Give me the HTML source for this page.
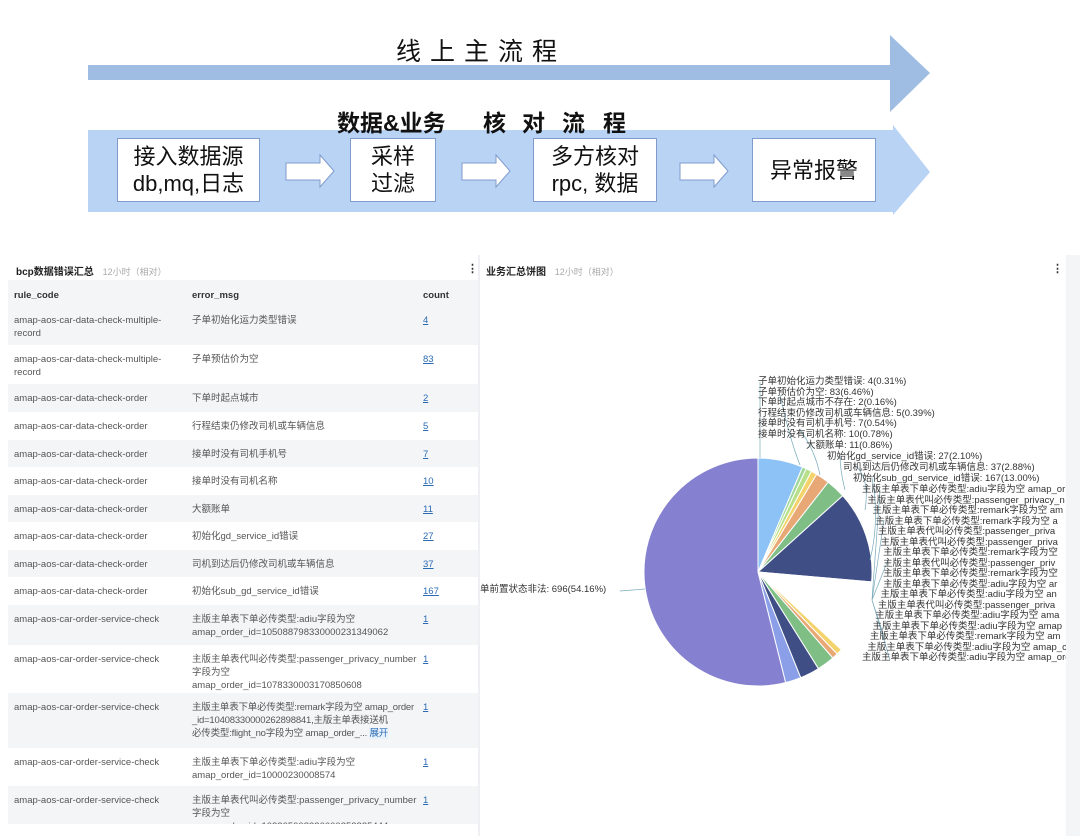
<!DOCTYPE html>
<html><head><meta charset="utf-8"><style>
*{margin:0;padding:0;box-sizing:border-box}
body{width:1080px;height:836px;background:#fff;position:relative;overflow:hidden;font-family:"Liberation Sans","Noto Sans CJK SC",sans-serif;color:#333}
.a{position:absolute}
.box{position:absolute;background:#fff;border:1px solid #7f9ccc;display:flex;align-items:center;justify-content:center;text-align:center;font-size:22px;line-height:27px;color:#111}
.row{position:absolute;left:8px;width:470px;font-size:9.5px;color:#555;line-height:13px}
.row .c1{position:absolute;left:6px;top:8px;width:150px}
.row .c2{position:absolute;left:184px;top:8px;width:225px}
.row .c3{position:absolute;left:415px;top:8px;color:#2a6bb5;text-decoration:underline}
.g{background:#f4f5f7}
.lbl{position:absolute;font-size:9.5px;color:#333;white-space:nowrap;line-height:10.5px}
.t{position:absolute;top:104px;font-size:23px;color:#111;font-weight:bold}
</style></head><body>
<svg class="a" style="left:0;top:0" width="1080" height="230">
<polygon points="88,65 890,65 890,35 930,73 890,112 890,80 88,80" fill="#9fbde3"/>
<polygon points="88,130 893,130 893,125 930,172 893,215 893,212 88,212" fill="#b8d3f4"/>
<g fill="#fff" stroke="#7f9ccc" stroke-width="1">
<polygon points="286,163 320,163 320,155 334,171 320,187 320,180 286,180"/>
<polygon points="462,163 496,163 496,155 510,171 496,187 496,180 462,180"/>
<polygon points="680,163 714,163 714,155 728,171 714,187 714,180 680,180"/>
</g>
</svg>
<div class="a" style="left:396px;top:32px;font-size:25px;letter-spacing:9px;color:#111">线上主流程</div>
<div class="t" style="left:337px">数据&amp;业务</div>
<div class="t" style="left:483px">核</div>
<div class="t" style="left:522px">对</div>
<div class="t" style="left:562px">流</div>
<div class="t" style="left:603px">程</div>
<div class="box" style="left:117px;top:138px;width:143px;height:64px">接入数据源<br>db,mq,日志</div>
<div class="box" style="left:350px;top:138px;width:86px;height:64px">采样<br>过滤</div>
<div class="box" style="left:533px;top:138px;width:124px;height:64px">多方核对<br>rpc, 数据</div>
<div class="box" style="left:752px;top:138px;width:124px;height:64px">异常报警</div>

<div class="a" style="left:16px;top:263px;font-size:10px;font-weight:bold;color:#222">bcp数据错误汇总 <span style="font-weight:normal;color:#aaa;font-size:9px;margin-left:6px">12小时（相对）</span></div>
<div class="a" style="left:467px;top:262px;font-size:11px;font-weight:bold">⋮</div>
<div class="row g" style="top:280px;height:26px;font-weight:bold;color:#333"><span class="c1" style="top:9px">rule_code</span><span class="c2" style="top:9px">error_msg</span><span class="c3" style="top:9px;color:#333;text-decoration:none;left:415px">count</span></div>
<div class="row g" style="top:306px;height:39px"><span class="c1">amap-aos-car-data-check-multiple-record</span><span class="c2">子单初始化运力类型错误</span><span class="c3">4</span></div>
<div class="row" style="top:345px;height:39px"><span class="c1">amap-aos-car-data-check-multiple-record</span><span class="c2">子单预估价为空</span><span class="c3">83</span></div>
<div class="row g" style="top:384px;height:28px"><span class="c1">amap-aos-car-data-check-order</span><span class="c2">下单时起点城市</span><span class="c3">2</span></div>
<div class="row" style="top:412px;height:28px"><span class="c1">amap-aos-car-data-check-order</span><span class="c2">行程结束仍修改司机或车辆信息</span><span class="c3">5</span></div>
<div class="row g" style="top:440px;height:27px"><span class="c1">amap-aos-car-data-check-order</span><span class="c2">接单时没有司机手机号</span><span class="c3">7</span></div>
<div class="row" style="top:467px;height:28px"><span class="c1">amap-aos-car-data-check-order</span><span class="c2">接单时没有司机名称</span><span class="c3">10</span></div>
<div class="row g" style="top:495px;height:27px"><span class="c1">amap-aos-car-data-check-order</span><span class="c2">大额账单</span><span class="c3">11</span></div>
<div class="row" style="top:522px;height:28px"><span class="c1">amap-aos-car-data-check-order</span><span class="c2">初始化gd_service_id错误</span><span class="c3">27</span></div>
<div class="row g" style="top:550px;height:27px"><span class="c1">amap-aos-car-data-check-order</span><span class="c2">司机到达后仍修改司机或车辆信息</span><span class="c3">37</span></div>
<div class="row" style="top:577px;height:28px"><span class="c1">amap-aos-car-data-check-order</span><span class="c2">初始化sub_gd_service_id错误</span><span class="c3">167</span></div>
<div class="row g" style="top:605px;height:40px"><span class="c1" style="width:170px">amap-aos-car-order-service-check</span><span class="c2">主版主单表下单必传类型:adiu字段为空 amap_order_id=105088798330000231349062</span><span class="c3">1</span></div>
<div class="row" style="top:645px;height:48px"><span class="c1" style="width:170px">amap-aos-car-order-service-check</span><span class="c2">主版主单表代叫必传类型:passenger_privacy_number 字段为空<br>amap_order_id=1078330003170850608</span><span class="c3">1</span></div>
<div class="row g" style="top:693px;height:55px"><span class="c1" style="width:170px">amap-aos-car-order-service-check</span><span class="c2" style="width:230px;letter-spacing:-0.2px">主版主单表下单必传类型:remark字段为空 amap_order _id=10408330000262898841,主版主单表接送机<br>必传类型:flight_no字段为空 amap_order_... <span style="color:#2a6bb5;background:#e8f1fb">展开</span></span><span class="c3">1</span></div>
<div class="row" style="top:748px;height:38px"><span class="c1" style="width:170px">amap-aos-car-order-service-check</span><span class="c2">主版主单表下单必传类型:adiu字段为空 amap_order_id=10000230008574</span><span class="c3">1</span></div>
<div class="row g" style="top:786px;height:38px;overflow:hidden"><span class="c1" style="width:170px">amap-aos-car-order-service-check</span><span class="c2">主版主单表代叫必传类型:passenger_privacy_number 字段为空<br>amap_order_id=102205008330000253835444</span><span class="c3">1</span></div>
<div class="a" style="left:478px;top:255px;width:2px;height:581px;background:#eef0f3"></div>

<div class="a" style="left:486px;top:263px;font-size:10px;font-weight:bold;color:#222">业务汇总饼图 <span style="font-weight:normal;color:#aaa;font-size:9px;margin-left:6px">12小时（相对）</span></div>
<div class="a" style="left:1052px;top:262px;font-size:11px;font-weight:bold">⋮</div>
<svg class="a" style="left:0;top:0" width="1080" height="836" id="pie"></svg>
<div class="lbl" style="left:758px;top:377px">子单初始化运力类型错误: 4(0.31%)<br>子单预估价为空: 83(6.46%)<br>下单时起点城市不存在: 2(0.16%)<br>行程结束仍修改司机或车辆信息: 5(0.39%)<br>接单时没有司机手机号: 7(0.54%)<br>接单时没有司机名称: 10(0.78%)</div>
<div class="lbl" style="left:806px;top:441px">大额账单: 11(0.86%)</div>
<div class="lbl" style="left:827px;top:452px">初始化gd_service_id错误: 27(2.10%)</div>
<div class="lbl" style="left:843px;top:463px">司机到达后仍修改司机或车辆信息: 37(2.88%)</div>
<div class="lbl" style="left:853px;top:474px">初始化sub_gd_service_id错误: 167(13.00%)</div>
<div class="lbl" style="left:862px;top:485px">主版主单表下单必传类型:adiu字段为空 amap_or<br>&nbsp;&nbsp;主版主单表代叫必传类型:passenger_privacy_n<br>&nbsp;&nbsp;&nbsp;&nbsp;主版主单表下单必传类型:remark字段为空 am<br>&nbsp;&nbsp;&nbsp;&nbsp;&nbsp;主版主单表下单必传类型:remark字段为空 a<br>&nbsp;&nbsp;&nbsp;&nbsp;&nbsp;&nbsp;主版主单表代叫必传类型:passenger_priva<br>&nbsp;&nbsp;&nbsp;&nbsp;&nbsp;&nbsp;&nbsp;主版主单表代叫必传类型:passenger_priva<br>&nbsp;&nbsp;&nbsp;&nbsp;&nbsp;&nbsp;&nbsp;&nbsp;主版主单表下单必传类型:remark字段为空<br>&nbsp;&nbsp;&nbsp;&nbsp;&nbsp;&nbsp;&nbsp;&nbsp;主版主单表代叫必传类型:passenger_priv<br>&nbsp;&nbsp;&nbsp;&nbsp;&nbsp;&nbsp;&nbsp;&nbsp;主版主单表下单必传类型:remark字段为空<br>&nbsp;&nbsp;&nbsp;&nbsp;&nbsp;&nbsp;&nbsp;&nbsp;主版主单表下单必传类型:adiu字段为空 ar<br>&nbsp;&nbsp;&nbsp;&nbsp;&nbsp;&nbsp;&nbsp;主版主单表下单必传类型:adiu字段为空 an<br>&nbsp;&nbsp;&nbsp;&nbsp;&nbsp;&nbsp;主版主单表代叫必传类型:passenger_priva<br>&nbsp;&nbsp;&nbsp;&nbsp;&nbsp;主版主单表下单必传类型:adiu字段为空 ama<br>&nbsp;&nbsp;&nbsp;&nbsp;主版主单表下单必传类型:adiu字段为空 amap<br>&nbsp;&nbsp;&nbsp;主版主单表下单必传类型:remark字段为空 am<br>&nbsp;&nbsp;主版主单表下单必传类型:adiu字段为空 amap_c<br>主版主单表下单必传类型:adiu字段为空 amap_ord</div>
<div class="lbl" style="left:480px;top:585px">单前置状态非法: 696(54.16%)</div>
<div class="a" style="left:1066px;top:255px;width:14px;height:581px;background:#f4f5f7"></div>
<script>
var s=document.getElementById('pie'),cx=758,cy=572,r=114;
function P(a){a=a*Math.PI/180;return (cx+r*Math.sin(a)).toFixed(1)+','+(cy-r*Math.cos(a)).toFixed(1)}
var sl=[[0,23,'#8cc2f5'],[23,25,'#9fd89a'],[25,28,'#b8e08a'],[28,31,'#f4d36a'],[31,38,'#e8a875'],[38,48,'#7fbf86'],[48,95,'#3f4f86'],[95,133,'#ffffff'],[133,136,'#f4d36a'],[136,139,'#e8a875'],[139,148,'#7fbf86'],[148,158,'#3f4f86'],[158,166,'#8a9fe8'],[166,360,'#8580cf']];
var h='';
sl.forEach(function(t){var la=(t[1]-t[0])>180?1:0;h+='<path d="M'+cx+','+cy+' L'+P(t[0])+' A'+r+','+r+' 0 '+la+' 1 '+P(t[1])+' Z" fill="'+t[2]+'" stroke="#fff" stroke-width="1"/>';});
h+='<g fill="none" stroke="#7ab" stroke-width="0.7"><path d="M760,458 L760,382"/><path d="M800,465 Q790,440 780,395"/><path d="M820,475 Q815,450 800,430"/><path d="M845,490 Q840,470 840,455"/><path d="M865,510 Q870,480 856,466"/><path d="M870,560 Q880,520 872,478"/><path d="M872,600 L880,490 M872,600 L885,640 M872,600 L890,660 M872,600 L884,520 M872,600 L888,560"/><path d="M645,589 L620,591"/></g>';
s.innerHTML=h;
</script>
</body></html>
